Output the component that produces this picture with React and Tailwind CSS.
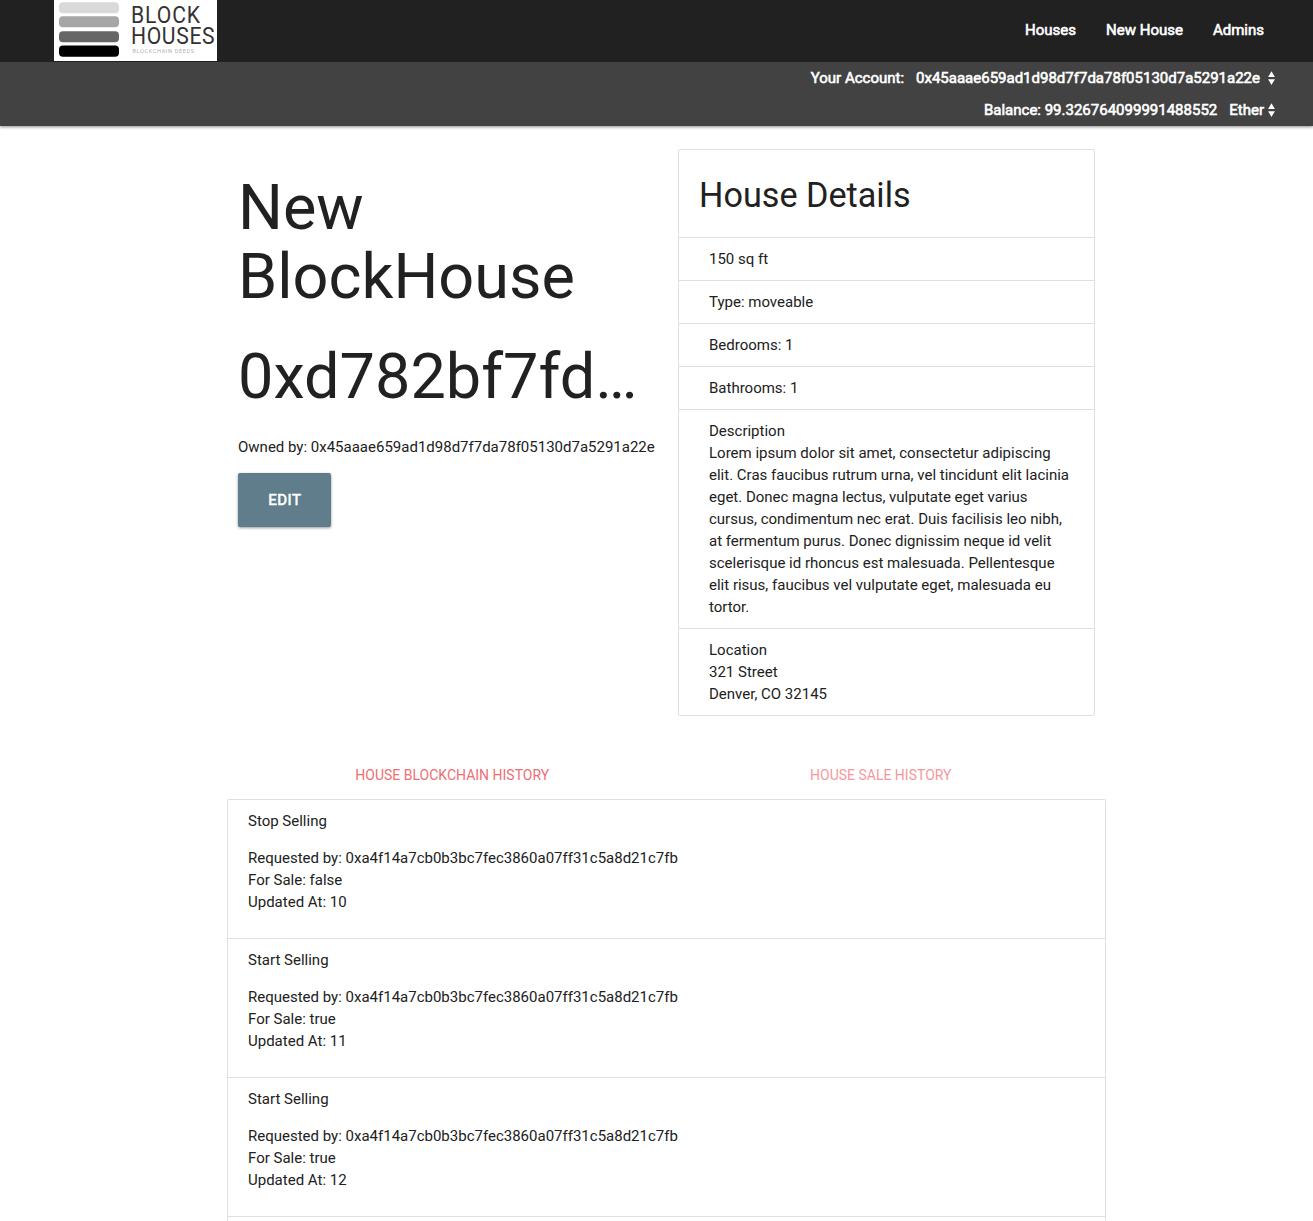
function Logo() {
  return (
    <svg className="block h-[61px] w-[163px]" viewBox="0 0 163 61" role="img" aria-label="Block Houses">
      <rect width="163" height="61" fill="#fff" />
      <rect x="5" y="2.3" width="60" height="11" rx="4" fill="#d9d9d9" />
      <rect x="5" y="16.3" width="60" height="11" rx="4" fill="#a6a6a6" />
      <rect x="5" y="31.3" width="60" height="11" rx="4" fill="#666" />
      <rect x="5" y="45.5" width="60" height="11.3" rx="4" fill="#000" />
      <g fontFamily="Roboto, sans-serif" fill="#333">
        <g transform="translate(77 0) scale(0.88 1)" fontSize="24">
          <text x="0" y="23.4" textLength="78.5">BLOCK</text>
          <text x="0" y="43.7" textLength="95">HOUSES</text>
        </g>
        <text x="78.5" y="53" fontSize="5.5" fill="#b0b0b0" textLength="61.5">BLOCKCHAIN DEEDS</text>
      </g>
    </svg>
  );
}

function Sorter() {
  return (
    <svg className="h-[14px] w-[7px] shrink-0" viewBox="0 0 7 14" fill="#fff" aria-hidden="true">
      <path d="M3.5 0.3L6.9 6H0.1Z" />
      <path d="M3.5 13.9L6.9 8.2H0.1Z" />
    </svg>
  );
}

function Header() {
  return (
    <header className="text-[15px] text-white shadow-[0_1px_3px_rgba(0,0,0,0.45)] [-webkit-text-stroke:0.6px_white]">
      <nav className="flex h-[62px] items-start justify-between bg-[#212121] pr-[49px] pl-[54px]">
        <div className="[-webkit-text-stroke:0]">
          <Logo />
        </div>
        <ul className="flex gap-[30px] leading-[60px]">
          <li>Houses</li>
          <li>New House</li>
          <li>Admins</li>
        </ul>
      </nav>
      <div className="flex h-16 flex-col items-end bg-[#424242] pr-[38px] leading-8">
        <div className="flex h-8 items-center">
          <span>Your Account:</span>
          <span className="ml-3">0x45aaae659ad1d98d7f7da78f05130d7a5291a22e</span>
          <span className="ml-2"><Sorter /></span>
        </div>
        <div className="flex h-8 items-center">
          <span>Balance: 99.326764099991488552</span>
          <span className="ml-3">Ether</span>
          <span className="ml-1"><Sorter /></span>
        </div>
      </div>
    </header>
  );
}

const details = [
  ["150 sq ft"],
  ["Type: moveable"],
  ["Bedrooms: 1"],
  ["Bathrooms: 1"],
  [
    "Description",
    "Lorem ipsum dolor sit amet, consectetur adipiscing",
    "elit. Cras faucibus rutrum urna, vel tincidunt elit lacinia",
    "eget. Donec magna lectus, vulputate eget varius",
    "cursus, condimentum nec erat. Duis facilisis leo nibh,",
    "at fermentum purus. Donec dignissim neque id velit",
    "scelerisque id rhoncus est malesuada. Pellentesque",
    "elit risus, faucibus vel vulputate eget, malesuada eu",
    "tortor.",
  ],
  ["Location", "321 Street", "Denver, CO 32145"],
];

const requester = "0xa4f14a7cb0b3bc7fec3860a07ff31c5a8d21c7fb";
const events = [
  { title: "Stop Selling", forSale: "false", updated: 10 },
  { title: "Start Selling", forSale: "true", updated: 11 },
  { title: "Start Selling", forSale: "true", updated: 12 },
];

export default function App() {
  return (
    <div className="h-[1221px] overflow-hidden bg-white font-['Roboto',sans-serif] text-[15px] leading-[22px] text-[#212121]">
      <Header />
      <main className="ml-[227px] w-[879px]">
        <div className="flex items-start justify-between px-[11px]">
          <section className="w-[417px] pt-[47px]">
            <h1 className="text-[63px] leading-[69px]">New<br />BlockHouse</h1>
            <h1 className="mt-[31px] text-[63px] leading-[69px] whitespace-nowrap">0xd782bf7fd…</h1>
            <p className="mt-[25px] whitespace-nowrap">Owned by: 0x45aaae659ad1d98d7f7da78f05130d7a5291a22e</p>
            <button className="mt-[15px] block h-[54px] w-[93px] rounded-[2px] bg-[#607d8b] pl-[0.5px] tracking-[0.5px] text-white shadow-[0_1px_3px_rgba(0,0,0,0.4)] [-webkit-text-stroke:0.6px_white]">EDIT</button>
          </section>
          <section className="mt-[23px] w-[417px] rounded-[2px] border border-[#e0e0e0]">
            <h4 className="h-[87px] pt-[26px] pl-5 text-[34.2px] leading-[38px]">House Details</h4>
            {details.map((lines) => (
              <div key={lines[0]} className="border-t border-[#e0e0e0] py-[10px] pl-[30px] whitespace-nowrap">
                {lines.map((line) => (
                  <div key={line}>{line}</div>
                ))}
              </div>
            ))}
          </section>
        </div>
        <div className="mt-[35px] flex px-[11px] text-center text-[14px] leading-[48px] text-[#ee6e73]">
          <div className="flex-1">HOUSE BLOCKCHAIN HISTORY</div>
          <div className="flex-1 opacity-70">HOUSE SALE HISTORY</div>
        </div>
        <div className="h-[440px] rounded-t-[2px] border border-b-0 border-[#e0e0e0]">
          {events.map((e) => (
            <article key={e.updated} className="h-[139px] border-b border-[#e0e0e0] px-5 pt-[10px]">
              <div>{e.title}</div>
              <div className="mt-[15px]">Requested by: {requester}</div>
              <div>For Sale: {e.forSale}</div>
              <div>Updated At: {e.updated}</div>
            </article>
          ))}
        </div>
      </main>
    </div>
  );
}
